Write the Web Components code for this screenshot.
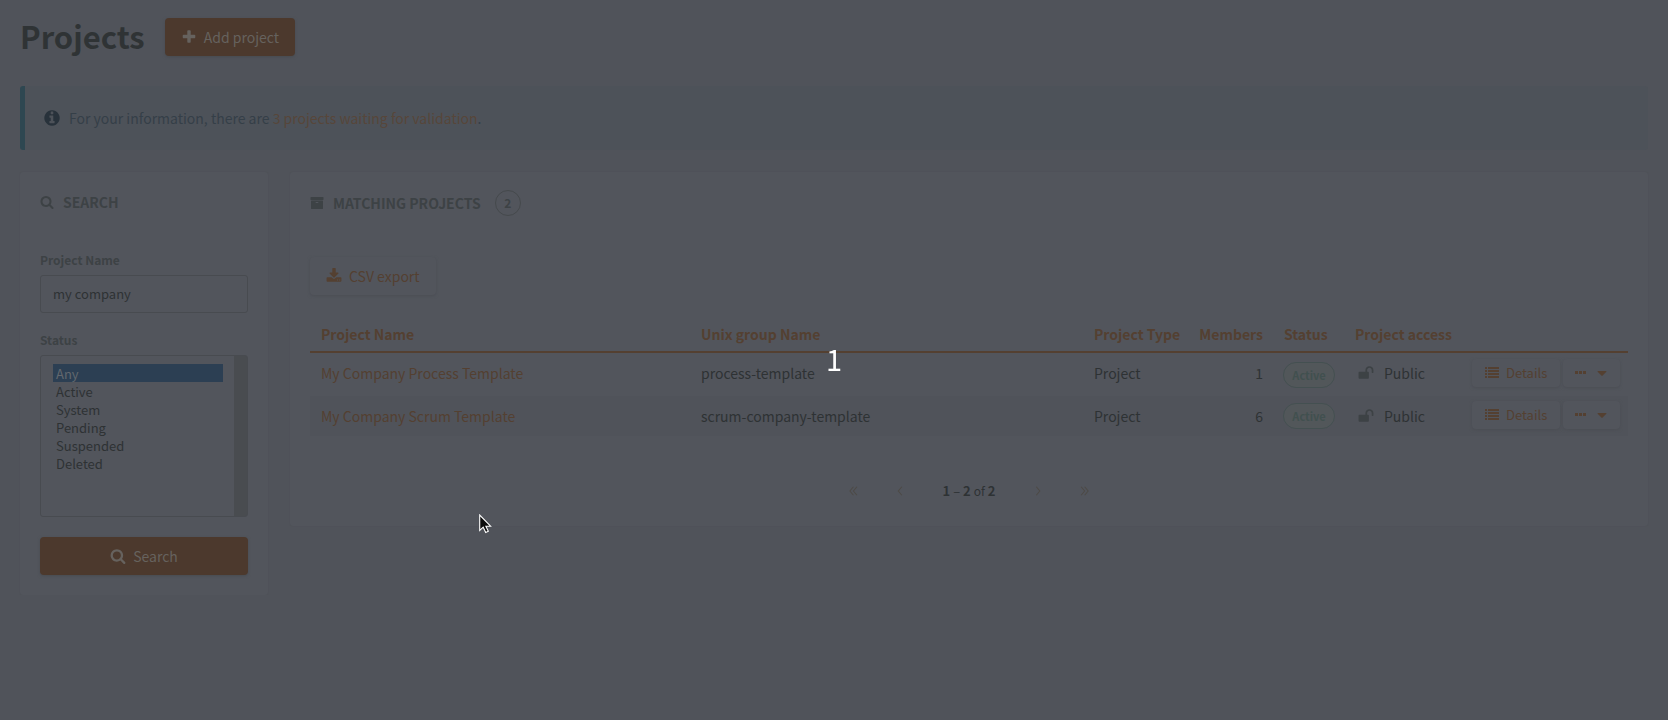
<!DOCTYPE html>
<html lang="en">
<head>
<meta charset="utf-8">
<title>Projects</title>
<style>
  :root {
    --page: #50535a;
    --card: #52555c;
    --line: #4b4e55;
    --text: #2e3234;
    --muted: #3d4245;
    --orange: #4c392d;
    --orange-text: #544031;
    --on-orange: #66625e;
  }
  html { min-height: 100%; background: var(--page); }
  body {
    margin: 0;
    background: var(--page);
    color: var(--text);
    font: 14px/20px "Noto Sans CJK SC", "Open Sans", sans-serif;
  }
</style>
</head>
<body>
<project-admin-page></project-admin-page>
<count-down>1</count-down>
<mouse-pointer></mouse-pointer>

<script>
const ICONS = {
  plus: 'M1600 736v192q0 40-28 68t-68 28h-416v416q0 40-28 68t-68 28h-192q-40 0-68-28t-28-68v-416h-416q-40 0-68-28t-28-68v-192q0-40 28-68t68-28h416v-416q0-40 28-68t68-28h192q40 0 68 28t28 68v416h416q40 0 68 28t28 68z',
  search: 'M1216 832q0-185-131.5-316.5t-316.5-131.5-316.5 131.5-131.5 316.5 131.5 316.5 316.5 131.5 316.5-131.5 131.5-316.5zm512 832q0 52-38 90t-90 38q-54 0-90-38l-343-342q-179 124-399 124-143 0-273.5-55.5t-225-150-150-225-55.5-273.5 55.5-273.5 150-225 225-150 273.5-55.5 273.5 55.5 225 150 150 225 55.5 273.5q0 220-124 399l343 343q37 37 37 90z',
  info: 'M1152 1376v-160q0-14-9-23t-23-9h-96v-512q0-14-9-23t-23-9h-320q-14 0-23 9t-9 23v160q0 14 9 23t23 9h96v320h-96q-14 0-23 9t-9 23v160q0 14 9 23t23 9h448q14 0 23-9t9-23zm-128-896v-192q0-14-9-23t-23-9h-192q-14 0-23 9t-9 23v192q0 14 9 23t23 9h192q14 0 23-9t9-23zm640 416q0 209-103 385.5t-279.5 279.5-385.5 103-385.5-103-279.5-279.5-103-385.5 103-385.5 279.5-279.5 385.5-103 385.5 103 279.5 279.5 103 385.5z',
  archive: 'M1088 832q0-26-19-45t-45-19h-256q-26 0-45 19t-19 45 19 45 45 19h256q26 0 45-19t19-45zm576-192v960q0 26-19 45t-45 19h-1408q-26 0-45-19t-19-45v-960q0-26 19-45t45-19h1408q26 0 45 19t19 45zm64-448v256q0 26-19 45t-45 19h-1536q-26 0-45-19t-19-45v-256q0-26 19-45t45-19h1536q26 0 45 19t19 45z',
  download: 'M1344 1344q0-26-19-45t-45-19-45 19-19 45 19 45 45 19 45-19 19-45zm256 0q0-26-19-45t-45-19-45 19-19 45 19 45 45 19 45-19 19-45zm128-224v320q0 40-28 68t-68 28h-1472q-40 0-68-28t-28-68v-320q0-40 28-68t68-28h465l135 136q58 56 136 56t136-56l136-136h464q40 0 68 28t28 68zm-325-569q17 41-14 70l-448 448q-18 19-45 19t-45-19l-448-448q-31-29-14-70 17-39 59-39h256v-448q0-26 19-45t45-19h256q26 0 45 19t19 45v448h256q42 0 59 39z',
  unlock: 'M1728 576v256q0 26-19 45t-45 19h-64q-26 0-45-19t-19-45v-256q0-106-75-181t-181-75-181 75-75 181v192h96q40 0 68 28t28 68v576q0 40-28 68t-68 28h-960q-40 0-68-28t-28-68v-576q0-40 28-68t68-28h672v-192q0-185 131.5-316.5t316.5-131.5 316.5 131.5 131.5 316.5z',
  list: 'M0 128h256v256h-256zM384 128h1408v256h-1408zM0 512h256v256h-256zM384 512h1408v256h-1408zM0 896h256v256h-256zM384 896h1408v256h-1408zM0 1280h256v256h-256zM384 1280h1408v256h-1408z',
  dots: 'M128 640h384v384h-384zM640 640h384v384h-384zM1152 640h384v384h-384z',
  caret: 'M1472 704q0 26-19 45l-512 512q-19 19-45 19t-45-19l-512-512q-19-19-19-45t19-45 45-19h1024q26 0 45 19t19 45z',
  first: 'M950 350L500 896l450 546M1400 350L950 896l450 546',
  prev: 'M1130 350L680 896l450 546',
  next: 'M680 350l450 546-450 546',
  last: 'M400 350l450 546-450 546M850 350l450 546-450 546'
};

const define = (name, html, setup) => {
  const template = document.createElement('template');
  template.innerHTML = html;
  customElements.define(name, class extends HTMLElement {
    constructor() {
      super();
      this.attachShadow({ mode: 'open' }).append(template.content.cloneNode(true));
    }
    connectedCallback() { if (setup) setup(this, this.shadowRoot); }
  });
};

/* Icon: name picks the shape, size its side in pixels */
define('ui-icon', `
  <style>
    :host { display: inline-flex; flex: none; }
    svg { display: block; overflow: visible; fill: currentColor; }
    svg.stroke { fill: none; stroke: currentColor; stroke-width: 130; }
  </style>
  <svg viewBox="0 0 1792 1792" aria-hidden="true"><path/></svg>`,
  (host, root) => {
    const svg = root.querySelector('svg');
    const name = host.getAttribute('name');
    svg.setAttribute('width', host.getAttribute('size') || 14);
    svg.setAttribute('height', host.getAttribute('size') || 14);
    svg.classList.toggle('stroke', ['first', 'prev', 'next', 'last'].includes(name));
    svg.firstElementChild.setAttribute('d', ICONS[name]);
  });

define('ui-button', `
  <style>
    :host { display: inline-flex; }
    button {
      flex: 1; display: flex; align-items: center; justify-content: center; gap: 7px;
      box-sizing: border-box; height: 38px; margin: 0; padding: 0 16px;
      border: 0; border-radius: 4px; cursor: pointer; white-space: nowrap;
      font: inherit; font-size: 14px; color: var(--on-orange);
      background: var(--orange); box-shadow: 0 1px 3px #484b50;
    }
    :host([outline]) button {
      color: var(--orange-text); background: var(--card);
      box-shadow: 0 1px 3px #4b4e54;
    }
    :host([small]) button { height: 28px; padding: 0 13px; font-size: 13px; }
    :host([title]) button { padding: 0 11px; }
  </style>
  <button type="button"><slot></slot></button>`,
  (host, root) => {
    if (host.title) root.querySelector('button').setAttribute('aria-label', host.title);
  });

define('ui-card', `
  <style>
    :host {
      display: block; box-sizing: border-box; padding: 20px;
      border-radius: 3px; background: var(--card);
      box-shadow: 0 0 1px var(--line);
    }
    header {
      display: flex; align-items: center; gap: 9px; min-height: 20px; margin-bottom: var(--heading-gap, 39px);
      color: var(--muted);
    }
    h2 { margin: 0; font-size: 14px; line-height: 20px; font-weight: 700; text-transform: uppercase; }
  </style>
  <header><slot name="icon"></slot><h2><slot name="title"></slot></h2><slot name="badge"></slot></header>
  <slot></slot>`);

define('count-badge', `
  <style>
    :host {
      display: flex; align-items: center; justify-content: center; box-sizing: border-box;
      width: 26px; height: 26px; margin-left: 5px; border: 1px solid #45494c; border-radius: 13px;
      font-size: 12px; font-weight: 700; color: var(--muted);
    }
  </style><slot></slot>`);

define('status-badge', `
  <style>
    :host {
      display: inline-flex; align-items: center; justify-content: center; box-sizing: border-box;
      width: 52px; height: 26px; vertical-align: middle;
      border: 1px solid #445051; border-radius: 13px; background: #52575a;
      font-size: 11px; line-height: 20px; font-weight: 700; color: #41504f;
    }
  </style><slot></slot>`);

define('page-header', `
  <style>
    :host { display: flex; align-items: center; gap: 20px; height: 38px; padding: 18px 20px 0; }
    h1 { margin: 0; font-size: 31px; line-height: 36px; padding-bottom: 2px; font-weight: 700; color: #2f3335; }
  </style>
  <h1>Projects</h1>
  <ui-button><ui-icon name="plus" size="16"></ui-icon>Add project</ui-button>`);

define('info-banner', `
  <style>
    :host {
      display: flex; align-items: center; gap: 8px; box-sizing: border-box; height: 64px;
      margin: 30px 20px 22px; padding: 0 18px; border-left: 5px solid #2e4751; border-radius: 3px;
      background: #4d5259; color: #353f48;
    }
    ui-icon { color: #28323b; }
  </style>
  <ui-icon name="info" size="18"></ui-icon>
  <span><slot></slot></span>`);

define('search-panel', `
  <style>
    :host { display: block; }
    form { display: flex; flex-direction: column; }
    label { margin-bottom: 6px; font-size: 12px; line-height: 18px; font-weight: 700; color: var(--muted); }
    input, select {
      box-sizing: border-box; width: 100%; margin: 0 0 18px; border: 1px solid #484b50;
      border-radius: 3px; background: transparent; color: var(--text); outline: 0;
      font: inherit; font-size: 13px;
    }
    input { height: 38px; padding: 0 12px 2px; }
    select {
      height: 162px; margin-bottom: 20px; padding: 8px 24px 8px 12px; overflow: hidden; scrollbar-width: none;
      background: linear-gradient(#494c50, #494c50) right / 13px 100% no-repeat;
    }
    option { height: 18px; box-sizing: border-box; padding: 0 3px; line-height: 16px; min-height: 18px; }
    option:checked { background: linear-gradient(#2c3f53, #2c3f53); color: #62686e; }
  </style>
  <ui-card>
    <ui-icon slot="icon" name="search"></ui-icon>
    <span slot="title">Search</span>
    <form>
      <label for="name">Project Name</label>
      <input id="name" type="text" value="my company">
      <label for="status">Status</label>
      <select id="status" multiple size="8">
        <option selected>Any</option><option>Active</option><option>System</option>
        <option>Pending</option><option>Suspended</option><option>Deleted</option>
      </select>
      <ui-button><ui-icon name="search" size="16"></ui-icon>Search</ui-button>
    </form>
  </ui-card>`);

define('project-table', `
  <style>
    :host { display: block; margin-top: 21px; }
    table { width: 100%; table-layout: fixed; border-collapse: separate; border-spacing: 0; }
    th, td { box-sizing: border-box; padding: 0 0 0 11px; text-align: left; white-space: nowrap; }
    th { height: 37px; border-bottom: 2px solid var(--orange-text); line-height: 20px; }
    td { height: 40px; }
    tr.odd td { height: 43px; padding-bottom: 3px; }
    tr.even td { background: #50535a; }
    .unix { width: 393px; }
    .type { width: 107px; }
    .members { width: 83px; }
    .status { width: 71px; }
    .access { width: 117px; }
    .actions { width: 167px; }
    th.num, td.num { padding-left: 0; padding-right: 10px; text-align: right; }
    tr td.badge { padding-left: 10px; padding-bottom: 0; }
    tr.odd td.more { padding-bottom: 3px; }
    tr.even td.more { padding-bottom: 2px; }
    a { color: var(--orange-text); text-decoration: none; }
    .inline { display: flex; align-items: center; gap: 10px; padding-left: 3px; }
    .inline ui-icon { color: var(--muted); }
    .buttons { display: flex; gap: 3px; }
  </style>
  <table>
    <colgroup><col><col class="unix"><col class="type"><col class="members"><col class="status"><col class="access"><col class="actions"></colgroup>
    <thead><tr>
      <th><a href="#name">Project Name</a></th><th><a href="#unix">Unix group Name</a></th>
      <th><a href="#type">Project Type</a></th><th class="num"><a href="#members">Members</a></th>
      <th><a href="#status">Status</a></th><th><a href="#access">Project access</a></th><th></th>
    </tr></thead>
    <tbody></tbody>
  </table>`,
  (host, root) => {
    const rows = [
      ['My Company Process Template', 'process-template', 1],
      ['My Company Scrum Template', 'scrum-company-template', 6]
    ];
    root.querySelector('tbody').innerHTML = rows.map(([name, unix, members], i) => `
      <tr class="${i % 2 ? 'even' : 'odd'}">
        <td><a href="#${unix}">${name}</a></td><td>${unix}</td><td>Project</td>
        <td class="num">${members}</td>
        <td class="badge"><status-badge>Active</status-badge></td>
        <td><div class="inline"><ui-icon name="unlock" size="16"></ui-icon>Public</div></td>
        <td class="more"><div class="buttons">
          <ui-button outline small><ui-icon name="list"></ui-icon>Details</ui-button>
          <ui-button outline small title="More actions"><ui-icon name="dots"></ui-icon><ui-icon name="caret"></ui-icon></ui-button>
        </div></td>
      </tr>`).join('');
  });

define('page-pagination', `
  <style>
    :host { display: flex; align-items: center; justify-content: center; gap: 33px; margin-top: 45px; height: 20px; font-size: 13px; }
    button { display: flex; padding: 0; border: 0; background: none; color: #4d4a46; }
    span { margin: 0 3px; }
    small { font-size: 12px; }
  </style>
  <button aria-label="First page"><ui-icon name="first"></ui-icon></button>
  <button aria-label="Previous page"><ui-icon name="prev"></ui-icon></button>
  <span><b>1</b> – <b>2</b> <small>of</small> <b>2</b></span>
  <button aria-label="Next page"><ui-icon name="next"></ui-icon></button>
  <button aria-label="Last page"><ui-icon name="last"></ui-icon></button>`);

define('matching-projects', `
  <style>
    :host { display: block; }
    ui-card { --heading-gap: 41px; padding-top: 18px; padding-bottom: 25px; }
  </style>
  <ui-card>
    <ui-icon slot="icon" name="archive"></ui-icon>
    <span slot="title">Matching projects</span>
    <count-badge slot="badge">2</count-badge>
    <ui-button outline><ui-icon name="download" size="16"></ui-icon>CSV export</ui-button>
    <project-table></project-table>
    <page-pagination></page-pagination>
  </ui-card>`);

define('project-admin-page', `
  <style>
    :host { display: block; }
    main { display: grid; grid-template-columns: 248px minmax(0, 1fr); gap: 22px; align-items: start; padding: 0 20px; }
    a { color: #57463a; text-decoration: none; }
  </style>
  <page-header></page-header>
  <info-banner>For your information, there are <a href="#pending">3 projects waiting for validation</a>.</info-banner>
  <main>
    <search-panel></search-panel>
    <matching-projects></matching-projects>
  </main>`);

/* Number centred over the whole window */
define('count-down', `
  <style>
    :host {
      position: fixed; inset: 0 0 4px; display: flex; align-items: center; justify-content: center;
      pointer-events: none; font-size: 29px; line-height: 40px; color: #fff;
    }
  </style><slot></slot>`);

define('mouse-pointer', `
  <style>
    :host { position: fixed; left: 479px; top: 514px; pointer-events: none; }
    svg { display: block; }
  </style>
  <svg width="14" height="20" viewBox="0 0 14 20" aria-hidden="true">
    <path d="M.7 1v15.5l3.500-3.300 2.500 5.300 2.600-1.200-2.400-5.100h4.700z" fill="#0d0d0d" stroke="#fff" stroke-width="1.100"/>
  </svg>`);
</script>
</body>
</html>
